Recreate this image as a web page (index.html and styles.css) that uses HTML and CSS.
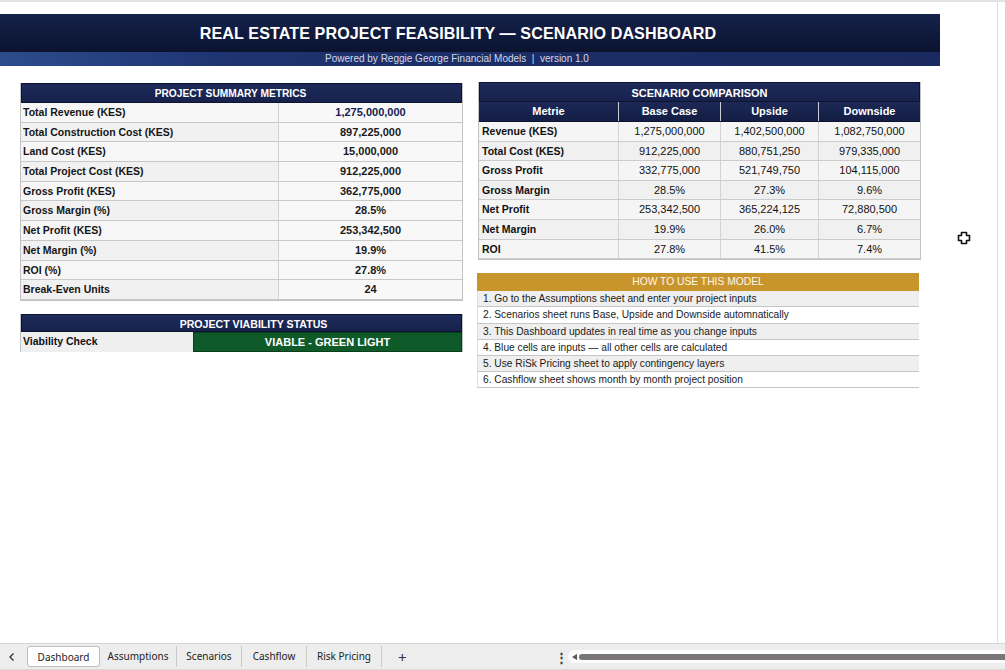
FILE: index.html
```html
<!DOCTYPE html>
<html>
<head>
<meta charset="utf-8">
<link rel="stylesheet" href="styles.css">
</head>
<body>
<div class="page">
  <div class="main">
    <div class="banner">
      <div class="title">REAL ESTATE PROJECT FEASIBILITY — SCENARIO DASHBOARD</div>
      <div class="subtitle">Powered by Reggie George Financial Models &nbsp;| &nbsp;version 1.0</div>
    </div>
    <div class="content">
      <div class="col col-left">
        <div class="summary">
          <div class="thead shead">PROJECT SUMMARY METRICS</div>
          <div class="srow"><div class="lbl">Total Revenue (KES)</div><div class="val val-hi">1,275,000,000</div></div>
          <div class="srow"><div class="lbl">Total Construction Cost (KES)</div><div class="val">897,225,000</div></div>
          <div class="srow"><div class="lbl">Land Cost (KES)</div><div class="val">15,000,000</div></div>
          <div class="srow"><div class="lbl">Total Project Cost (KES)</div><div class="val">912,225,000</div></div>
          <div class="srow"><div class="lbl">Gross Profit (KES)</div><div class="val">362,775,000</div></div>
          <div class="srow"><div class="lbl">Gross Margin (%)</div><div class="val">28.5%</div></div>
          <div class="srow"><div class="lbl">Net Profit (KES)</div><div class="val">253,342,500</div></div>
          <div class="srow"><div class="lbl">Net Margin (%)</div><div class="val">19.9%</div></div>
          <div class="srow"><div class="lbl">ROI (%)</div><div class="val">27.8%</div></div>
          <div class="srow"><div class="lbl">Break-Even Units</div><div class="val">24</div></div>
        </div>
        <div class="viability">
          <div class="thead vhead">PROJECT VIABILITY STATUS</div>
          <div class="vrow"><div class="vlbl">Viability Check</div><div class="vval">VIABLE - GREEN LIGHT</div></div>
        </div>
      </div>
      <div class="col col-right">
        <div class="scenario">
          <div class="thead">SCENARIO COMPARISON</div>
          <div class="crow chead"><div>Metrie</div><div>Base Case</div><div>Upside</div><div>Downside</div></div>
          <div class="crow"><div>Revenue (KES)</div><div>1,275,000,000</div><div>1,402,500,000</div><div>1,082,750,000</div></div>
          <div class="crow"><div>Total Cost (KES)</div><div>912,225,000</div><div>880,751,250</div><div>979,335,000</div></div>
          <div class="crow"><div>Gross Profit</div><div>332,775,000</div><div>521,749,750</div><div>104,115,000</div></div>
          <div class="crow"><div>Gross Margin</div><div>28.5%</div><div>27.3%</div><div>9.6%</div></div>
          <div class="crow"><div>Net Profit</div><div>253,342,500</div><div>365,224,125</div><div>72,880,500</div></div>
          <div class="crow"><div>Net Margin</div><div>19.9%</div><div>26.0%</div><div>6.7%</div></div>
          <div class="crow"><div>ROI</div><div>27.8%</div><div>41.5%</div><div>7.4%</div></div>
        </div>
        <div class="howto">
          <div class="ghead">HOW TO USE THIS MODEL</div>
          <div class="hrow">1. Go to the Assumptions sheet and enter your project inputs</div>
          <div class="hrow">2. Scenarios sheet runs Base, Upside and Downside automnatically</div>
          <div class="hrow">3. This Dashboard updates in real time as you change inputs</div>
          <div class="hrow">4. Blue cells are inputs — all other cells are calculated</div>
          <div class="hrow">5. Use RiSk Pricing sheet to apply contingency layers</div>
          <div class="hrow">6. Cashflow sheet shows month by month project position</div>
        </div>
      </div>
    </div>
  </div>
  <div class="tabbar">
    <div class="nav"><svg width="8" height="10" viewBox="0 0 8 10"><path d="M5.5 1.5 L2 5 L5.5 8.5" fill="none" stroke="#333" stroke-width="1.3"/></svg></div>
    <div class="tabs">
      <div class="tab active">Dashboard</div>
      <div class="tab">Assumptions</div>
      <div class="tab">Scenarios</div>
      <div class="tab">Cashflow</div>
      <div class="tab">Risk Pricing</div>
    </div>
    <div class="plus">+</div>
    <div class="dots">&#8942;</div>
    <div class="scroll">
      <span class="arrow"></span>
      <span class="thumb"></span>
    </div>
  </div>
  <svg class="cursor" width="14" height="14" viewBox="0 0 14 14">
    <path d="M4.5 1.5 H9.5 V4.5 H12.5 V9.5 H9.5 V12.5 H4.5 V9.5 H1.5 V4.5 H4.5 Z" fill="#fff" stroke="#111" stroke-width="1.6" stroke-linejoin="round"/>
  </svg>
</div>
</body>
</html>
```

FILE: styles.css
```css
html, body {
  margin: 0;
  padding: 0;
  background: #ffffff;
}
body {
  font-family: "Liberation Sans", Arial, sans-serif;
  color: #111;
}
.page {
  width: 1005px;
  height: 670px;
  display: flex;
  flex-direction: column;
  position: relative;
  overflow: hidden;
  border-top: 2px solid #e2e2e2;
  box-sizing: border-box;
}
.main {
  height: 641px;
  padding-top: 12px;
  box-sizing: border-box;
  border-right: 1px solid #dedede;
  width: 998px;
}
.banner {
  width: 940px;
}
.title {
  height: 38px;
  line-height: 38px;
  background: linear-gradient(180deg, #15224a 0%, #0f1a3c 55%, #0b1330 100%);
  color: #fff;
  text-align: center;
  font-weight: bold;
  font-size: 16.1px;
  letter-spacing: 0.1px;
  padding-right: 24px;
  box-sizing: border-box;
}
.subtitle {
  height: 14px;
  line-height: 14px;
  background: linear-gradient(90deg, #2c4c8c 0%, #1e3370 25%, #1b2c64 60%, #1a2a60 100%);
  color: #d3d8e8;
  font-size: 10px;
  text-align: center;
  padding-right: 26px;
  box-sizing: border-box;
}
.content {
  display: flex;
  gap: 15px;
  padding: 16px 0 0 20px;
  align-items: flex-start;
}
.col {
  width: 443px;
  display: flex;
  flex-direction: column;
}
.col-left {
  padding-top: 1px;
}
.thead {
  height: 20px;
  line-height: 20px;
  background: linear-gradient(180deg, #1d2a5a 0%, #17224c 100%);
  color: #fff;
  font-weight: bold;
  font-size: 11px;
  text-align: center;
  border: 1px solid #0d1430;
  box-sizing: border-box;
}
.shead {
  font-size: 10.2px;
  padding-right: 22px;
}
.summary {
  border: 1px solid #c2c2c2;
  border-top: none;
}
.srow {
  display: grid;
  grid-template-columns: 258px 1fr;
  height: 19.7px;
  border-bottom: 1px solid #c8c8c8;
  box-sizing: border-box;
  background: #f6f6f6;
}
.srow:nth-child(odd) { background: #f1f1f1; }
.lbl {
  font-size: 10.5px;
  font-weight: bold;
  line-height: 18.7px;
  padding-left: 2px;
  border-right: 1px solid #d0d0d0;
  color: #151515;
}
.val {
  font-size: 11px;
  font-weight: bold;
  text-align: center;
  line-height: 18.7px;
  color: #1a1a1a;
  background: #f8f8f8;
}
.val-hi { color: #142253; }
.viability {
  margin-top: 13px;
  border: 1px solid #c2c2c2;
  border-top: none;
}
.vhead {
  height: 18px;
  line-height: 18px;
  font-size: 10.6px;
  padding-left: 24px;
}
.vrow {
  display: grid;
  grid-template-columns: 172px 1fr;
  height: 19px;
}
.vlbl {
  font-size: 10.5px;
  font-weight: bold;
  line-height: 19px;
  padding-left: 2px;
  background: #efefef;
}
.vval {
  background: #0e5a29;
  color: #fff;
  font-weight: bold;
  font-size: 11px;
  text-align: center;
  line-height: 18px;
  border: 1px solid #073d1b;
}
.scenario {
  border: 1px solid #c2c2c2;
  border-top: none;
}
.crow {
  display: grid;
  grid-template-columns: 140px 102px 98px 1fr;
  height: 19.6px;
  border-bottom: 1px solid #cbcbcb;
  box-sizing: border-box;
  background: #f5f5f5;
}
.crow:nth-child(even) { background: #f0f0f0; }
.crow > div {
  font-size: 11px;
  line-height: 18.6px;
  text-align: center;
  border-right: 1px solid #d3d3d3;
}
.crow > div:last-child { border-right: none; }
.crow > div:first-child {
  text-align: left;
  padding-left: 3px;
  font-weight: bold;
  font-size: 10.5px;
}
.crow.chead {
  height: 20px;
  background: linear-gradient(180deg, #1c2856 0%, #141e45 100%);
  border-bottom: 1px solid #0d1430;
}
.crow.chead > div {
  color: #fff;
  font-weight: bold;
  font-size: 11px;
  text-align: center;
  padding-left: 0;
  line-height: 19px;
  border-right: 1px solid #c9ccd6;
}
.crow.chead > div:last-child { border-right: none; }
.howto {
  margin-top: 13px;
  margin-left: -1px;
  width: 442px;
}
.ghead {
  height: 18px;
  line-height: 18px;
  background: #c8952d;
  color: #fff8e8;
  text-align: center;
  font-size: 10.3px;
}
.hrow {
  height: 16.2px;
  line-height: 15.2px;
  font-size: 10.2px;
  padding-left: 5px;
  border-bottom: 1px solid #c6c6c6;
  border-left: 1px solid #e0e0e0;
  box-sizing: border-box;
  background: #ffffff;
  color: #1a1a1a;
}
.hrow:nth-child(even) { background: #efefef; }
.tabbar {
  height: 25px;
  background: #ededed;
  border-top: 1px solid #d6d6d6;
  border-bottom: 1px solid #d9d9d9;
  display: flex;
  align-items: center;
  font-family: "Noto Sans", "Liberation Sans", sans-serif;
  font-size: 10px;
  color: #222;
}
.nav {
  width: 27px;
  display: flex;
  justify-content: center;
  padding-right: 3px;
  box-sizing: border-box;
}
.tabs {
  display: flex;
  align-items: center;
  height: 21px;
}
.tab {
  height: 21px;
  line-height: 20px;
  border-right: 1px solid #c9c9c9;
  box-sizing: border-box;
  white-space: nowrap;
  text-align: center;
}
.tab:nth-child(2) { width: 77px; }
.tab:nth-child(3) { width: 65px; }
.tab:nth-child(4) { width: 65px; }
.tab:nth-child(5) { width: 75px; }
.tab.active {
  width: 73px;
  background: #fff;
  border: 1px solid #bdbdbd;
  border-radius: 3px;
}
.plus {
  margin-left: 16px;
  font-size: 15px;
  color: #333;
  width: 12px;
}
.dots {
  margin-left: 145px;
  font-size: 13px;
  font-weight: bold;
  color: #333;
  width: 8px;
}
.scroll {
  margin-left: 5px;
  flex: 1;
  height: 13px;
  background: #fbfbfb;
  border-radius: 7px 0 0 7px;
  display: flex;
  align-items: center;
  padding-left: 4px;
  gap: 2px;
}
.arrow {
  width: 0;
  height: 0;
  border-top: 3.5px solid transparent;
  border-bottom: 3.5px solid transparent;
  border-right: 5px solid #555;
}
.thumb {
  flex: 1;
  height: 6px;
  background: #7a7576;
  border-radius: 3px 0 0 3px;
}
.cursor {
  position: absolute;
  left: 957px;
  top: 229px;
}
```
